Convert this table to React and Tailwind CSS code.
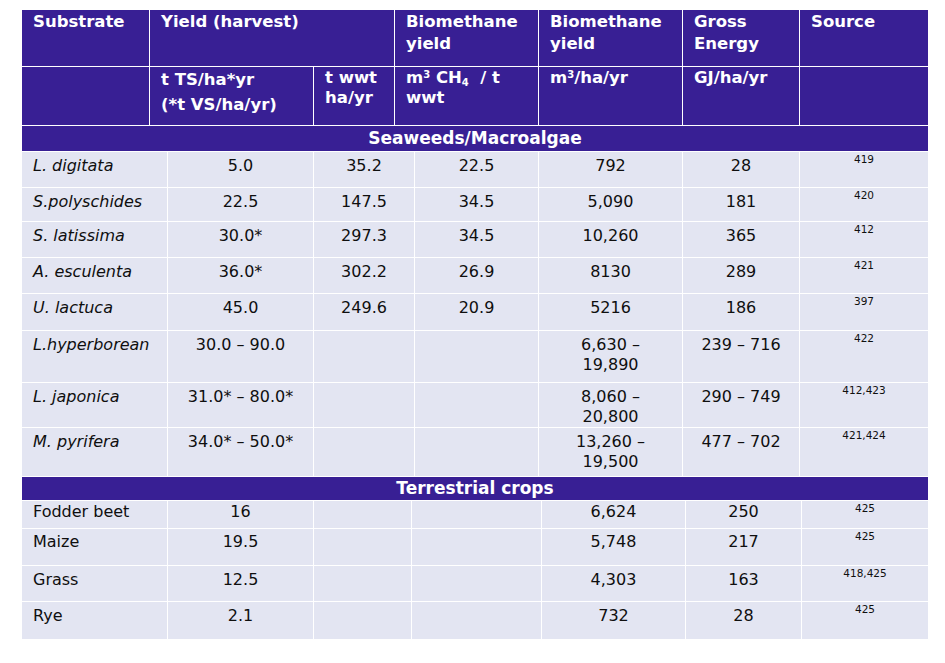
const HEAD_COLS = "grid-cols-[127px_163px_80px_143px_143px_116px_128px]";
const SEA_COLS = "grid-cols-[145px_145px_100px_123px_143px_116px_128px]";
const LAND_COLS = "grid-cols-[145px_145px_97px_129px_143px_115px_126px]";

const seaweeds = [
  { name: "L. digitata", ts: "5.0", wwt: "35.2", ch4: "22.5", bm: ["792"], gj: "28", src: "419", h: "h-[35px]" },
  { name: "S.polyschides", ts: "22.5", wwt: "147.5", ch4: "34.5", bm: ["5,090"], gj: "181", src: "420", h: "h-[33px]" },
  { name: "S. latissima", ts: "30.0*", wwt: "297.3", ch4: "34.5", bm: ["10,260"], gj: "365", src: "412", h: "h-[35px]" },
  { name: "A. esculenta", ts: "36.0*", wwt: "302.2", ch4: "26.9", bm: ["8130"], gj: "289", src: "421", h: "h-[35px]" },
  { name: "U. lactuca", ts: "45.0", wwt: "249.6", ch4: "20.9", bm: ["5216"], gj: "186", src: "397", h: "h-[36px]" },
  { name: "L.hyperborean", ts: "30.0 – 90.0", wwt: "", ch4: "", bm: ["6,630 –", "19,890"], gj: "239 – 716", src: "422", h: "h-[51px]" },
  { name: "L. japonica", ts: "31.0* – 80.0*", wwt: "", ch4: "", bm: ["8,060 –", "20,800"], gj: "290 – 749", src: "412,423", h: "h-[44px]" },
  { name: "M. pyrifera", ts: "34.0* – 50.0*", wwt: "", ch4: "", bm: ["13,260 –", "19,500"], gj: "477 – 702", src: "421,424", h: "h-[48px]" },
];

const crops = [
  { name: "Fodder beet", ts: "16", bm: "6,624", gj: "250", src: "425", h: "h-[27px]", pt: "pt-0" },
  { name: "Maize", ts: "19.5", bm: "5,748", gj: "217", src: "425", h: "h-[36px]", pt: "pt-[2px]" },
  { name: "Grass", ts: "12.5", bm: "4,303", gj: "163", src: "418,425", h: "h-[35px]", pt: "pt-[3px]" },
  { name: "Rye", ts: "2.1", bm: "732", gj: "28", src: "425", h: "h-[37px]", pt: "pt-[3px]" },
];

function Cell({ children, className = "" }) {
  return <div className={"bg-[#e3e5f2] overflow-hidden " + className}>{children}</div>;
}

function Head({ children, className = "" }) {
  return (
    <div className={"bg-[#381f94] px-[11px] text-white font-bold text-[16.5px] overflow-hidden " + className}>
      {children}
    </div>
  );
}

function Section({ title, h }) {
  return (
    <div className={"bg-[#381f94] text-white font-bold text-center text-[17px] " + h}>{title}</div>
  );
}

export default function App() {
  return (
    <div className="min-h-screen bg-white pt-[10px] pl-[22px] font-['DejaVu_Sans',Verdana,sans-serif] text-[16px] text-[#0f0f0f]">
      <div className="w-[906px] bg-white flex flex-col gap-px">
        <div className={"grid gap-px h-[56px] grid-rows-[56px] " + HEAD_COLS}>
          <Head className="leading-[22px] pt-px">Substrate</Head>
          <Head className="col-span-2 leading-[22px] pt-px">Yield (harvest)</Head>
          <Head className="leading-[22px] pt-px">Biomethane<br />yield</Head>
          <Head className="leading-[22px] pt-px">Biomethane<br />yield</Head>
          <Head className="leading-[22px] pt-px">Gross<br />Energy</Head>
          <Head className="leading-[22px] pt-px">Source</Head>
        </div>
        <div className={"grid gap-px h-[58px] grid-rows-[58px] " + HEAD_COLS}>
          <Head />
          <Head className="leading-[25px] pt-0">t TS/ha*yr<br />(*t VS/ha/yr)</Head>
          <Head className="leading-[20px] pt-px">t wwt<br />ha/yr</Head>
          <Head className="leading-[20px] pt-px">
            m<sup className="text-[10px]">3</sup> CH<sub className="text-[10px]">4</sub>&nbsp; / t<br />wwt
          </Head>
          <Head className="leading-[20px] pt-px">m<sup className="text-[10px]">3</sup>/ha/yr</Head>
          <Head className="leading-[20px] pt-px">GJ/ha/yr</Head>
          <Head />
        </div>
        <Section title="Seaweeds/Macroalgae" h="h-[25px] leading-[24px]" />
        {seaweeds.map((r) => (
          <div key={r.name} className={"grid gap-px grid-rows-[100%] leading-[20px] " + SEA_COLS + " " + r.h}>
            <Cell className="pl-[11px] pt-[4px] italic">{r.name}</Cell>
            <Cell className="text-center pt-[4px]">{r.ts}</Cell>
            <Cell className="text-center pt-[4px]">{r.wwt}</Cell>
            <Cell className="text-center pt-[4px]">{r.ch4}</Cell>
            <Cell className="text-center pt-[4px]">
              {r.bm.map((l) => (
                <div key={l}>{l}</div>
              ))}
            </Cell>
            <Cell className="text-center pt-[4px]">{r.gj}</Cell>
            <Cell className="text-center text-[10.5px] leading-[14px] pt-0">{r.src}</Cell>
          </div>
        ))}
        <Section title="Terrestrial crops" h="h-[23px] leading-[22px]" />
        {crops.map((r) => (
          <div key={r.name} className={"grid gap-px grid-rows-[100%] leading-[21px] " + LAND_COLS + " " + r.h}>
            <Cell className={"pl-[11px] " + r.pt}>{r.name}</Cell>
            <Cell className={"text-center " + r.pt}>{r.ts}</Cell>
            <Cell />
            <Cell />
            <Cell className={"text-center " + r.pt}>{r.bm}</Cell>
            <Cell className={"text-center " + r.pt}>{r.gj}</Cell>
            <Cell className="text-center text-[10.5px] leading-[14px] pt-0">{r.src}</Cell>
          </div>
        ))}
      </div>
    </div>
  );
}
